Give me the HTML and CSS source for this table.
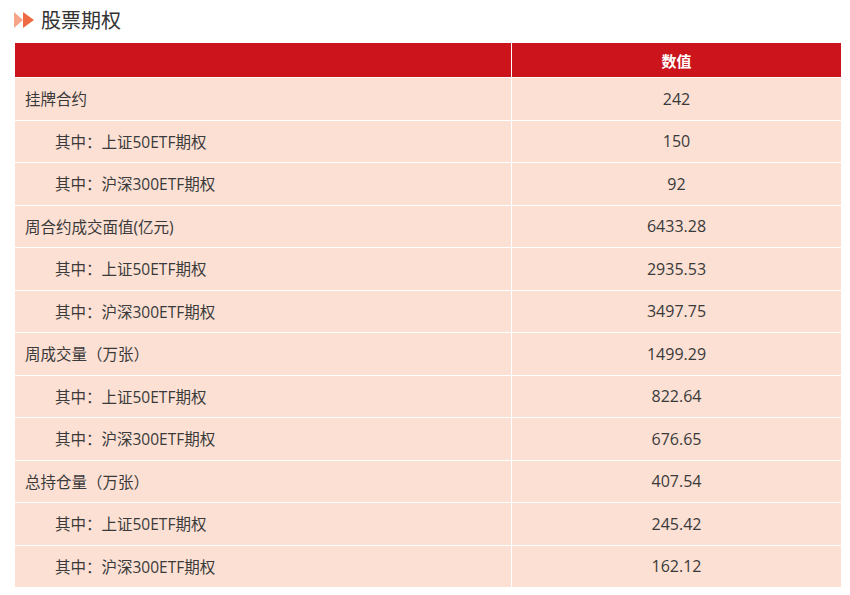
FILE: index.html
```html
<!DOCTYPE html>
<html lang="zh">
<head>
<meta charset="utf-8">
<link rel="stylesheet" href="styles.css">
</head>
<body>
<div class="page">
  <h2 class="title">
    <svg class="arrows" width="22" height="16" viewBox="0 0 22 16">
      <polygon points="0,0 9,8 0,16" fill="#f7a58a"/>
      <polygon points="9,0 20,8 9,16" fill="#ef6a43"/>
    </svg>
    <span>股票期权</span>
  </h2>
  <table class="data">
    <colgroup>
      <col class="c-name">
      <col class="c-val">
    </colgroup>
    <thead>
      <tr><th class="name"></th><th class="val">数值</th></tr>
    </thead>
    <tbody>
      <tr><td class="name">挂牌合约</td><td class="val">242</td></tr>
      <tr><td class="name sub">其中：上证50ETF期权</td><td class="val">150</td></tr>
      <tr><td class="name sub">其中：沪深300ETF期权</td><td class="val">92</td></tr>
      <tr><td class="name">周合约成交面值(亿元)</td><td class="val">6433.28</td></tr>
      <tr><td class="name sub">其中：上证50ETF期权</td><td class="val">2935.53</td></tr>
      <tr><td class="name sub">其中：沪深300ETF期权</td><td class="val">3497.75</td></tr>
      <tr><td class="name">周成交量（万张）</td><td class="val">1499.29</td></tr>
      <tr><td class="name sub">其中：上证50ETF期权</td><td class="val">822.64</td></tr>
      <tr><td class="name sub">其中：沪深300ETF期权</td><td class="val">676.65</td></tr>
      <tr><td class="name">总持仓量（万张）</td><td class="val">407.54</td></tr>
      <tr><td class="name sub">其中：上证50ETF期权</td><td class="val">245.42</td></tr>
      <tr><td class="name sub">其中：沪深300ETF期权</td><td class="val">162.12</td></tr>
    </tbody>
  </table>
</div>
</body>
</html>
```

FILE: styles.css
```css
html, body {
  margin: 0;
  padding: 0;
  background: #ffffff;
}
body {
  font-family: "Open Sans", "Noto Sans CJK SC", sans-serif;
  color: #3a3a3a;
}
.page {
  padding: 0 8px 0 14px;
}
.title {
  margin: 0;
  height: 38px;
  display: flex;
  align-items: center;
  gap: 5px;
  font-size: 20px;
  font-weight: normal;
  color: #333333;
  font-family: "Noto Sans CJK SC", sans-serif;
  padding-top: 1px;
  box-sizing: border-box;
}
.arrows {
  display: block;
}
.data {
  margin-top: 4px;
  width: 828px;
  table-layout: fixed;
  border-collapse: collapse;
  font-size: 15.5px;
}
.c-name {
  width: 497px;
}
.data th, .data td {
  border: 1px solid #ffffff;
  padding: 0;
}
.data thead th {
  background: #cb141c;
  color: #ffffff;
  height: 34px;
  font-weight: bold;
  font-family: "Noto Sans CJK SC", sans-serif;
  font-size: 15px;
}
.data tbody td {
  background: #fce0d4;
  height: 41.5px;
}
.data .name {
  text-align: left;
  padding-left: 10px;
}
.data .name.sub {
  padding-left: 40px;
}
.data .val {
  text-align: center;
}
.data tbody .val {
  font-size: 16px;
}
.data tbody tr:last-child td {
  border-bottom: none;
}
```
